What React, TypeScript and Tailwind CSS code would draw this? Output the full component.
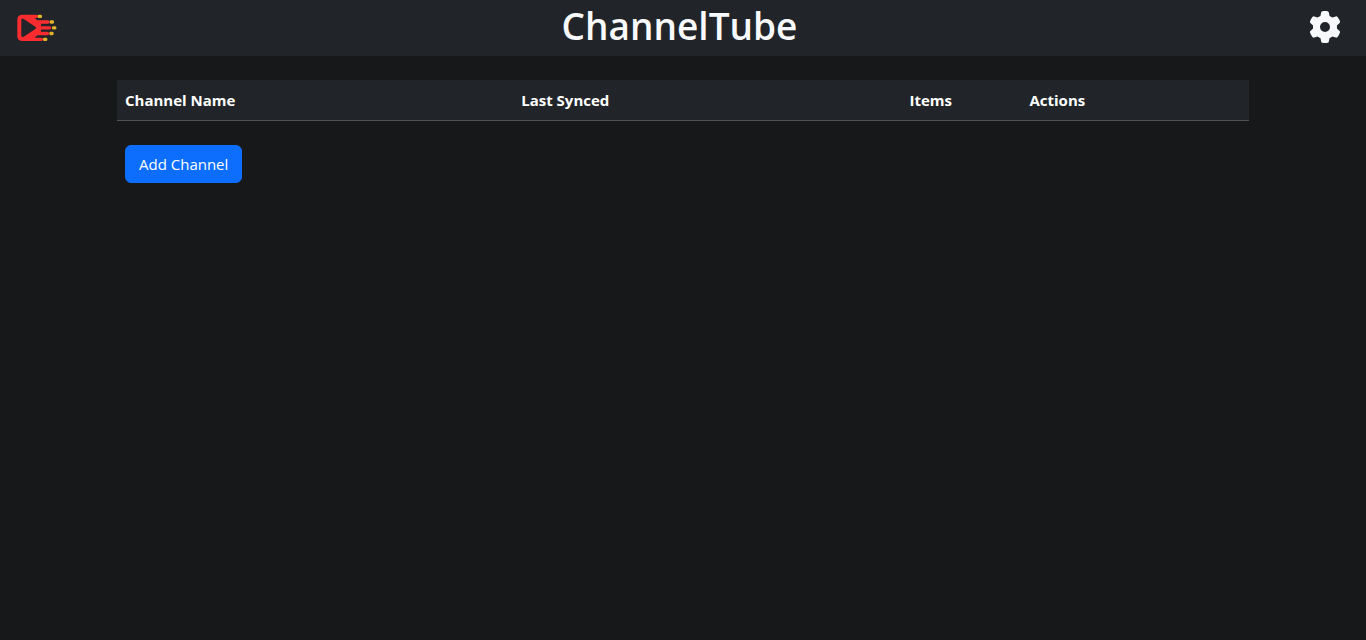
import { FaGear } from "react-icons/fa6";

const columns = [
  { label: "Channel Name", width: "w-[35%]" },
  { label: "Last Synced", width: "w-[34.3%]" },
  { label: "Items", width: "w-[10.6%]" },
  { label: "Actions", width: "w-[20.1%]" },
];

function Logo() {
  return (
    <svg viewBox="18 27 126 84" className="h-7 w-[42px]" role="img" aria-label="ChannelTube logo">
      <path
        fill="#fb2c30"
        d="M38 29H79a5 5 0 0 1 0 10H74L82 46H114a5 5 0 0 1 0 10H93V63.500H119a5 5 0 0 1 0 10H93V80.500H112a5 5 0 0 1 0 10H82L74 98H94a5 5 0 0 1 0 10H38Q22 108 22 93V44Q22 29 38 29Z"
      />
      <path fill="#212529" d="M34 46Q34 38 41 42L76 65Q81 68.500 76 72L41 95Q34 99 34 91Z" />
      <g fill="#e3b32a">
        <rect x="83" y="29" width="13" height="10" rx="4" />
        <rect x="119" y="46" width="13" height="10" rx="4" />
        <rect x="126" y="63.500" width="13" height="10" rx="4" />
        <rect x="118" y="80.500" width="13" height="10" rx="4" />
        <rect x="99" y="98" width="13" height="10" rx="4" />
      </g>
    </svg>
  );
}

export default function App() {
  return (
    <div className="min-h-screen bg-[#17181a] font-['Open_Sans','Noto_Sans',sans-serif] text-white">
      <header className="flex h-14 items-center justify-between bg-[#212529] pr-[25px] pl-4">
        <Logo />
        <h1 className="pb-1 text-[37px] leading-[48px] font-semibold text-[#f8f9fa]">ChannelTube</h1>
        <button type="button" aria-label="Settings" className="pb-0.5 pl-2 text-[#f8f9fa]">
          <FaGear className="size-8" />
        </button>
      </header>
      <main className="mx-auto max-w-[1140px] px-1 pt-6">
        <table className="w-full table-fixed border-collapse text-left">
          <thead>
            <tr className="border-b border-[#4d5154] bg-[#212529]">
              {columns.map((column) => (
                <th
                  key={column.label}
                  scope="col"
                  className={`${column.width} p-2 text-[15px] leading-6 font-bold`}
                >
                  {column.label}
                </th>
              ))}
            </tr>
          </thead>
          <tbody />
        </table>
        <div className="px-2 pt-6">
          <button
            type="button"
            className="rounded-md border border-[#0d6efd] bg-[#0d6efd] px-[13px] py-[6px] text-[15px] leading-6"
          >
            Add Channel
          </button>
        </div>
      </main>
    </div>
  );
}
